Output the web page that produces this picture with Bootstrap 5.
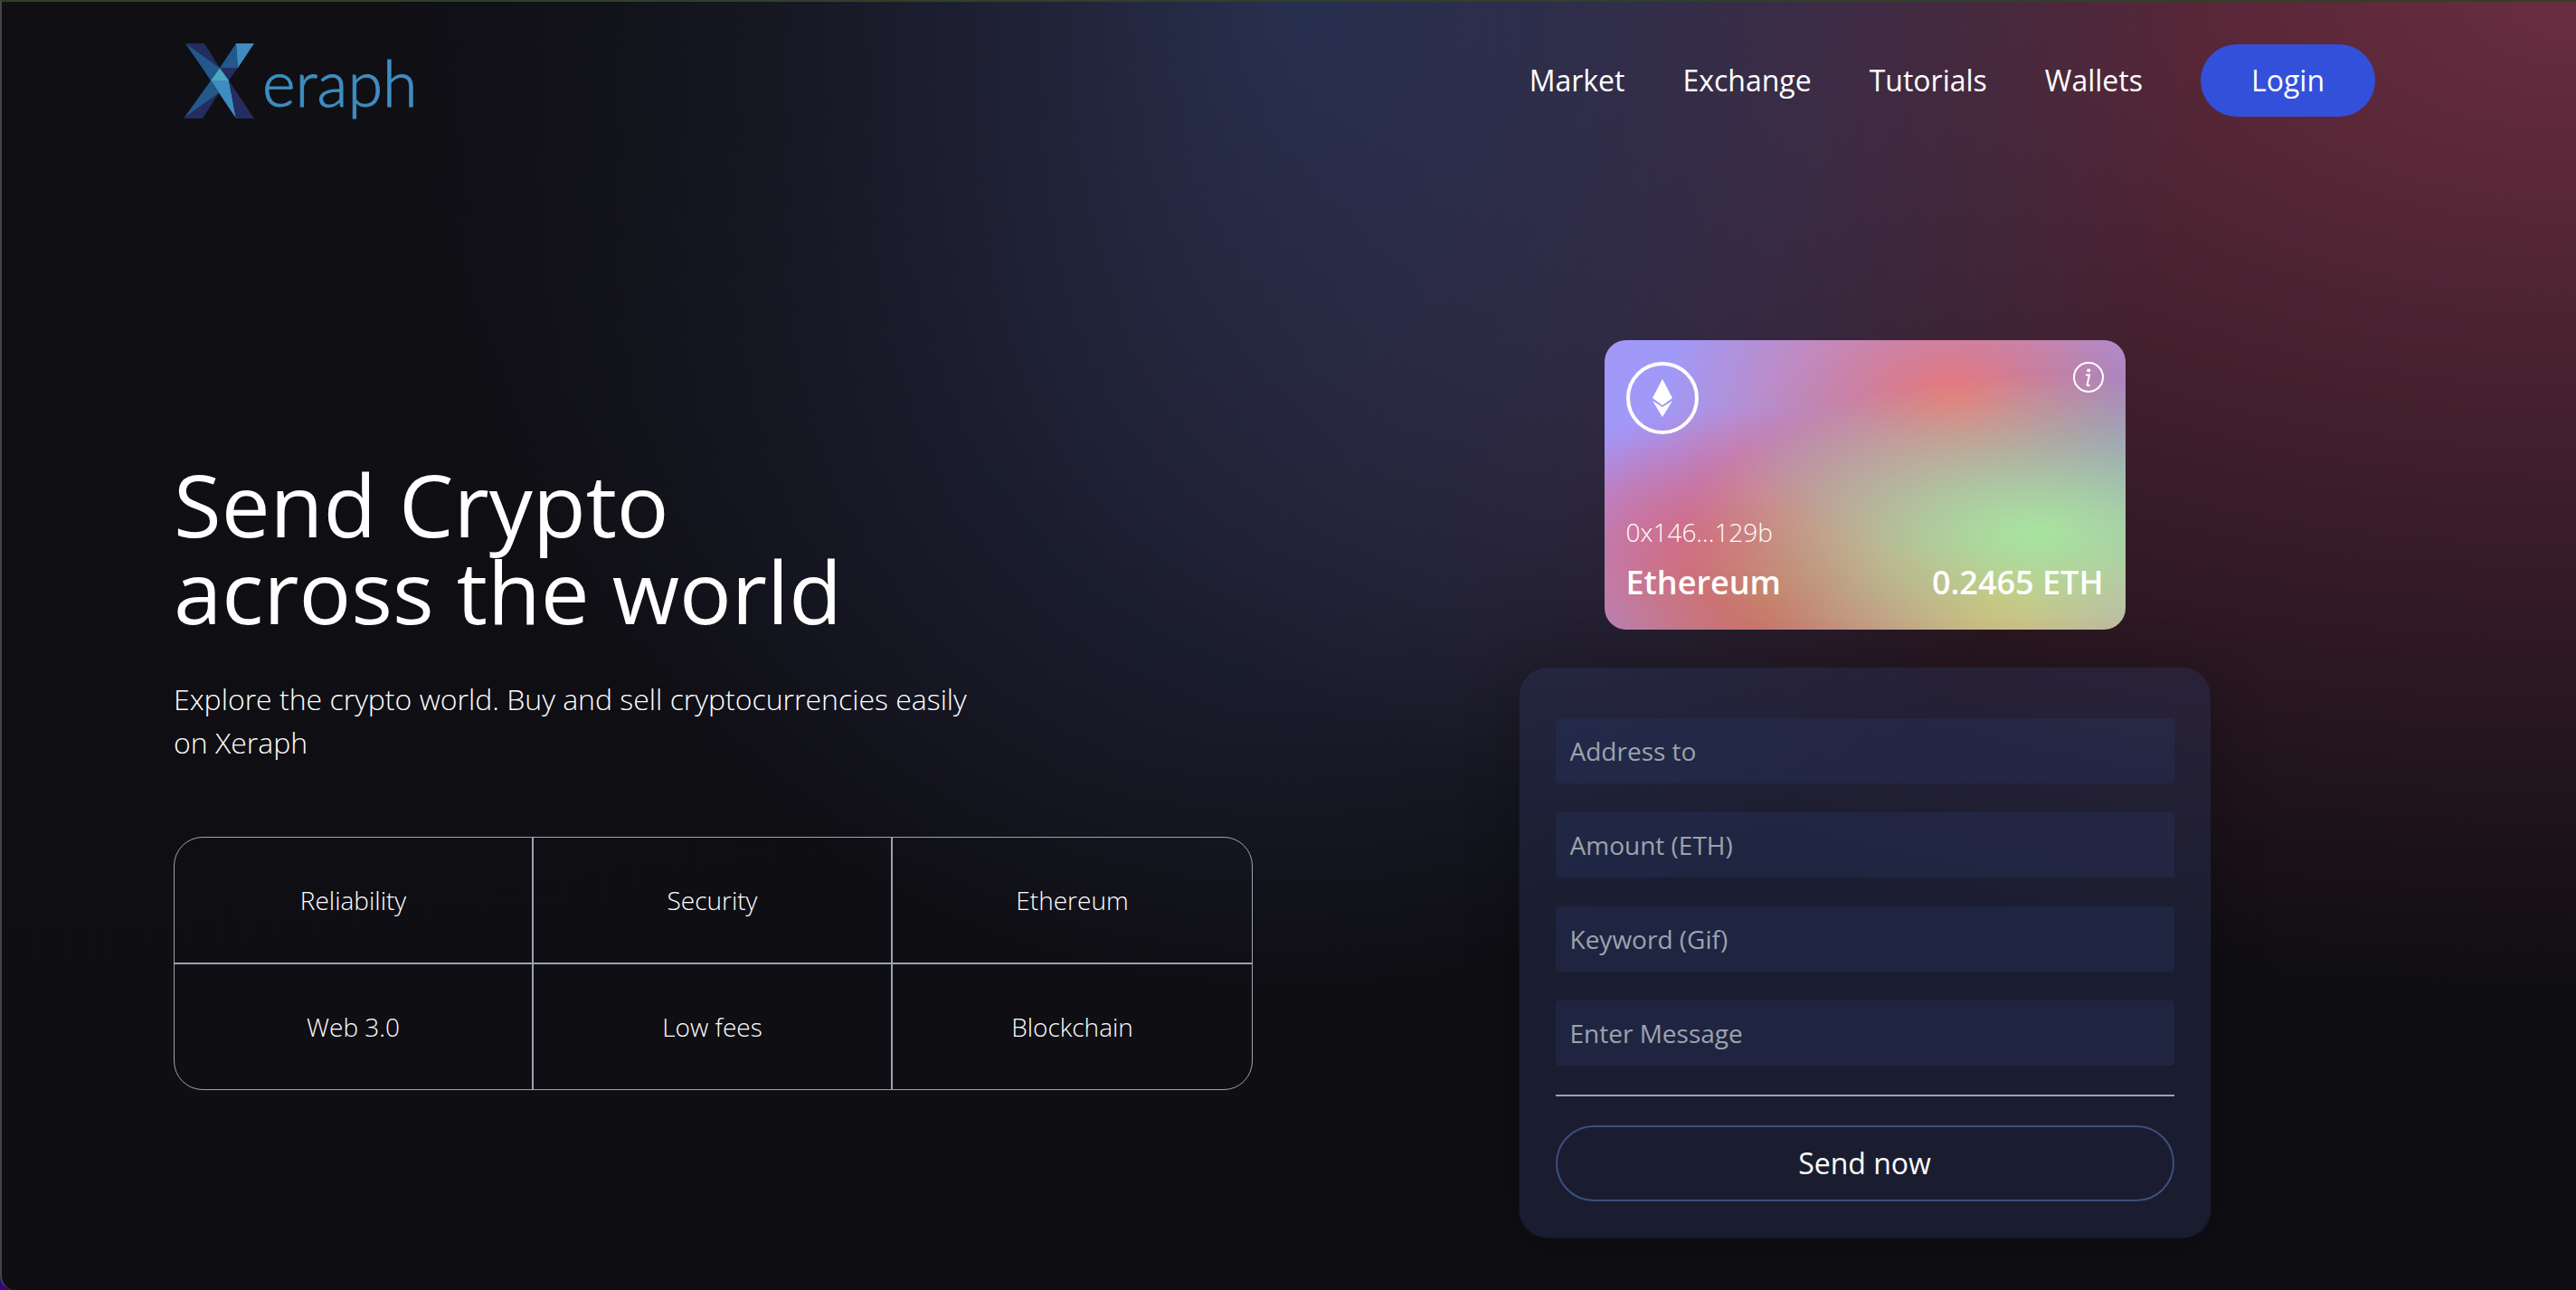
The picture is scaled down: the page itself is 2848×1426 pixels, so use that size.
<!DOCTYPE html>
<html lang="en">
<head>
<meta charset="utf-8">
<meta name="viewport" content="width=device-width, initial-scale=1">
<title>Xeraph</title>
<link href="https://cdn.jsdelivr.net/npm/bootstrap@5.3.0/dist/css/bootstrap.min.css" rel="stylesheet">
<style>
  body { font-family: "Open Sans", sans-serif; background: #34087a; color: #fff; font-size: 32px; line-height: 48px; }
  .welcome-bg {
    border-top: 2px solid #2f4029; border-left: 2px solid #454549; border-bottom-left-radius: 16px;
    background-color: #0f0e13;
    background-size: 100% 108%;
    background-repeat: no-repeat;
    background-image:
      radial-gradient(at 0% 0%, rgb(16,15,20) 0, transparent 50%),
      radial-gradient(at 50% 0%, rgb(50,61,103) 0, transparent 50%),
      radial-gradient(at 100% 0%, rgb(106,45,65) 0, transparent 50%);
  }
  .site-nav { padding: 32px 222px 32px 191px; }
  .site-logo { width: 280px; height: 110px; margin-left: 10px; }
  .nav-items { gap: 64px; margin-top: 15px; }
  .nav-items a { color: #fff; text-decoration: none; }
  .btn-login { background: #3350db; color: #fff; font-size: 32px; line-height: 48px; padding: 16px 56px; }
  .btn-login:hover { background: #2546bd; color: #fff; }
  .hero { padding: 200px 190px 56px 190px; gap: 80px; }
  .hero > div { flex: 1 1 0; min-width: 0; }
  .hero-copy { padding-top: 133px; }
  .hero-title { font-size: 96px; line-height: 96px; font-weight: 400; padding-bottom: 8px; margin: 0; }
  .hero-text { width: 75%; font-weight: 300; margin: 40px 0 80px; }
  .feature-grid { border-radius: 32px; overflow: hidden; border: 1px solid #9ca3af; margin: 0; font-size: 28px; font-weight: 300; }
  .feature-grid > div { height: 138px; }
  .feature-grid > .line-b { height: 140px; }
  .line-r { border-right: 2px solid #9ca3af; }
  .line-b { border-bottom: 2px solid #9ca3af; }
  .eth-card {
    width: 576px; height: 320px; padding: 24px; border-radius: 24px; margin-bottom: 41px;
    background-color: #a099f8;
    background-image:
      radial-gradient(at 83% 67%, rgb(167,229,159) 0, transparent 58%),
      radial-gradient(at 67% 20%, rgb(233,119,121) 0, transparent 59%),
      radial-gradient(at 88% 35%, rgb(100,137,232) 0, transparent 50%),
      radial-gradient(at 31% 91%, rgb(202,114,98) 0, transparent 52%),
      radial-gradient(at 27% 71%, rgb(229,93,157) 0, transparent 49%),
      radial-gradient(at 74% 89%, rgb(240,171,91) 0, transparent 51%),
      radial-gradient(at 53% 75%, rgb(126,245,232) 0, transparent 45%);
  }
  .eth-address { font-size: 28px; line-height: 40px; font-weight: 300; margin: 0 0 8px; }
  .eth-balance { font-size: 36px; line-height: 56px; font-weight: 600; margin: 0; }
  .send-form {
    width: 766px; padding: 56px 40px 40px; border-radius: 32px;
    background: rgba(43,50,88,.42); border: 1px solid rgba(0,0,0,.3);
    box-shadow: 0 8px 60px rgba(0,0,0,.22);
  }
  .send-form .form-control {
    height: 72px; padding: 0 16px; margin-bottom: 32px; border: 0; border-radius: 4px;
    background: rgba(39,49,90,.42); color: #fff; font-size: 28px; line-height: 40px;
  }
  .send-form .form-control::placeholder { color: #9ca3af; opacity: 1; }
  .form-line { height: 2px; background: #9ca3af; margin: 0 0 32px; border: 0; opacity: 1; }
  .btn-send { border: 2px solid #3d4f7c; color: #fff; font-size: 32px; line-height: 48px; padding: 16px; }
  .btn-send:hover { background: #3d4f7c; color: #fff; }
</style>
</head>
<body>
<div class="welcome-bg min-vh-100">
  <nav class="site-nav d-flex justify-content-between align-items-start">
    <a href="#" aria-label="Xeraph">
      <svg class="site-logo d-block" viewBox="0 0 280 110">
        <g transform="translate(0 14)">
          <path fill="#242c60" d="M2 0H23L40 27Z"/>
          <path fill="#22588a" d="M2 0L40 27L30 41Z"/>
          <path fill="#22588a" d="M58 0L60 27H40Z"/>
          <path fill="#3d8dc0" d="M58 0H78L60 27Z"/>
          <path fill="#242c60" d="M40 27H60L50 41Z"/>
          <path fill="#22588a" d="M30 41L39 55L0 83Z"/>
          <path fill="#242c60" d="M39 55L21 83H0Z"/>
          <path fill="#3d8dc0" d="M30 41H50L58 83Z"/>
          <path fill="#242c60" d="M50 41L78 83H58Z"/>
          <path fill="#4aa8c0" d="M40 27L50 41H30Z"/>
        </g>
        <text x="87" y="84" font-family="Lato, sans-serif" font-weight="300" font-size="70" fill="#3d8dc0" stroke="#3d8dc0" stroke-width="1">eraph</text>
      </svg>
    </a>
    <div class="nav-items d-flex align-items-center">
      <a href="#">Market</a>
      <a href="#">Exchange</a>
      <a href="#">Tutorials</a>
      <a href="#">Wallets</a>
      <button type="button" class="btn btn-login rounded-pill border-0">Login</button>
    </div>
  </nav>

  <main class="hero d-flex align-items-start">
    <div class="hero-copy">
      <h1 class="hero-title">Send Crypto<br>across the world</h1>
      <p class="hero-text">Explore the crypto world. Buy and sell cryptocurrencies easily on Xeraph</p>
      <div class="feature-grid row">
        <div class="col-4 d-flex align-items-center justify-content-center line-r line-b">Reliability</div>
        <div class="col-4 d-flex align-items-center justify-content-center line-r line-b">Security</div>
        <div class="col-4 d-flex align-items-center justify-content-center line-b">Ethereum</div>
        <div class="col-4 d-flex align-items-center justify-content-center line-r">Web 3.0</div>
        <div class="col-4 d-flex align-items-center justify-content-center line-r">Low fees</div>
        <div class="col-4 d-flex align-items-center justify-content-center">Blockchain</div>
      </div>
    </div>

    <div class="d-flex flex-column align-items-center">
      <section class="eth-card d-flex flex-column justify-content-between">
        <div class="d-flex justify-content-between align-items-start">
          <svg width="80" height="80" viewBox="0 0 80 80" aria-hidden="true">
            <circle cx="40" cy="40" r="38" fill="none" stroke="#fff" stroke-width="4"/>
            <path fill="#fff" d="M40 19L51 40L40 48L29 40ZM29 43L40 50L51 43L40 61Z"/>
          </svg>
          <svg width="34" height="34" viewBox="0 0 34 34" aria-hidden="true">
            <circle cx="17" cy="17" r="16" fill="none" stroke="#fff" stroke-width="2"/>
            <circle cx="17.200" cy="9.500" r="2" fill="#fff"/>
            <path d="M14 14.500H18L15.500 25.500Q15.500 27 18.500 25.500" fill="none" stroke="#fff" stroke-width="2"/>
          </svg>
        </div>
        <div>
          <p class="eth-address">0x146...129b</p>
          <p class="eth-balance d-flex justify-content-between"><span>Ethereum</span><span>0.2465 ETH</span></p>
        </div>
      </section>

      <form class="send-form">
        <input class="form-control" type="text" placeholder="Address to" aria-label="Address to">
        <input class="form-control" type="text" placeholder="Amount (ETH)" aria-label="Amount (ETH)">
        <input class="form-control" type="text" placeholder="Keyword (Gif)" aria-label="Keyword (Gif)">
        <input class="form-control" type="text" placeholder="Enter Message" aria-label="Enter Message">
        <hr class="form-line">
        <button type="button" class="btn btn-send rounded-pill w-100">Send now</button>
      </form>
    </div>
  </main>
</div>
<script src="https://cdn.jsdelivr.net/npm/bootstrap@5.3.0/dist/js/bootstrap.bundle.min.js"></script>
</body>
</html>
